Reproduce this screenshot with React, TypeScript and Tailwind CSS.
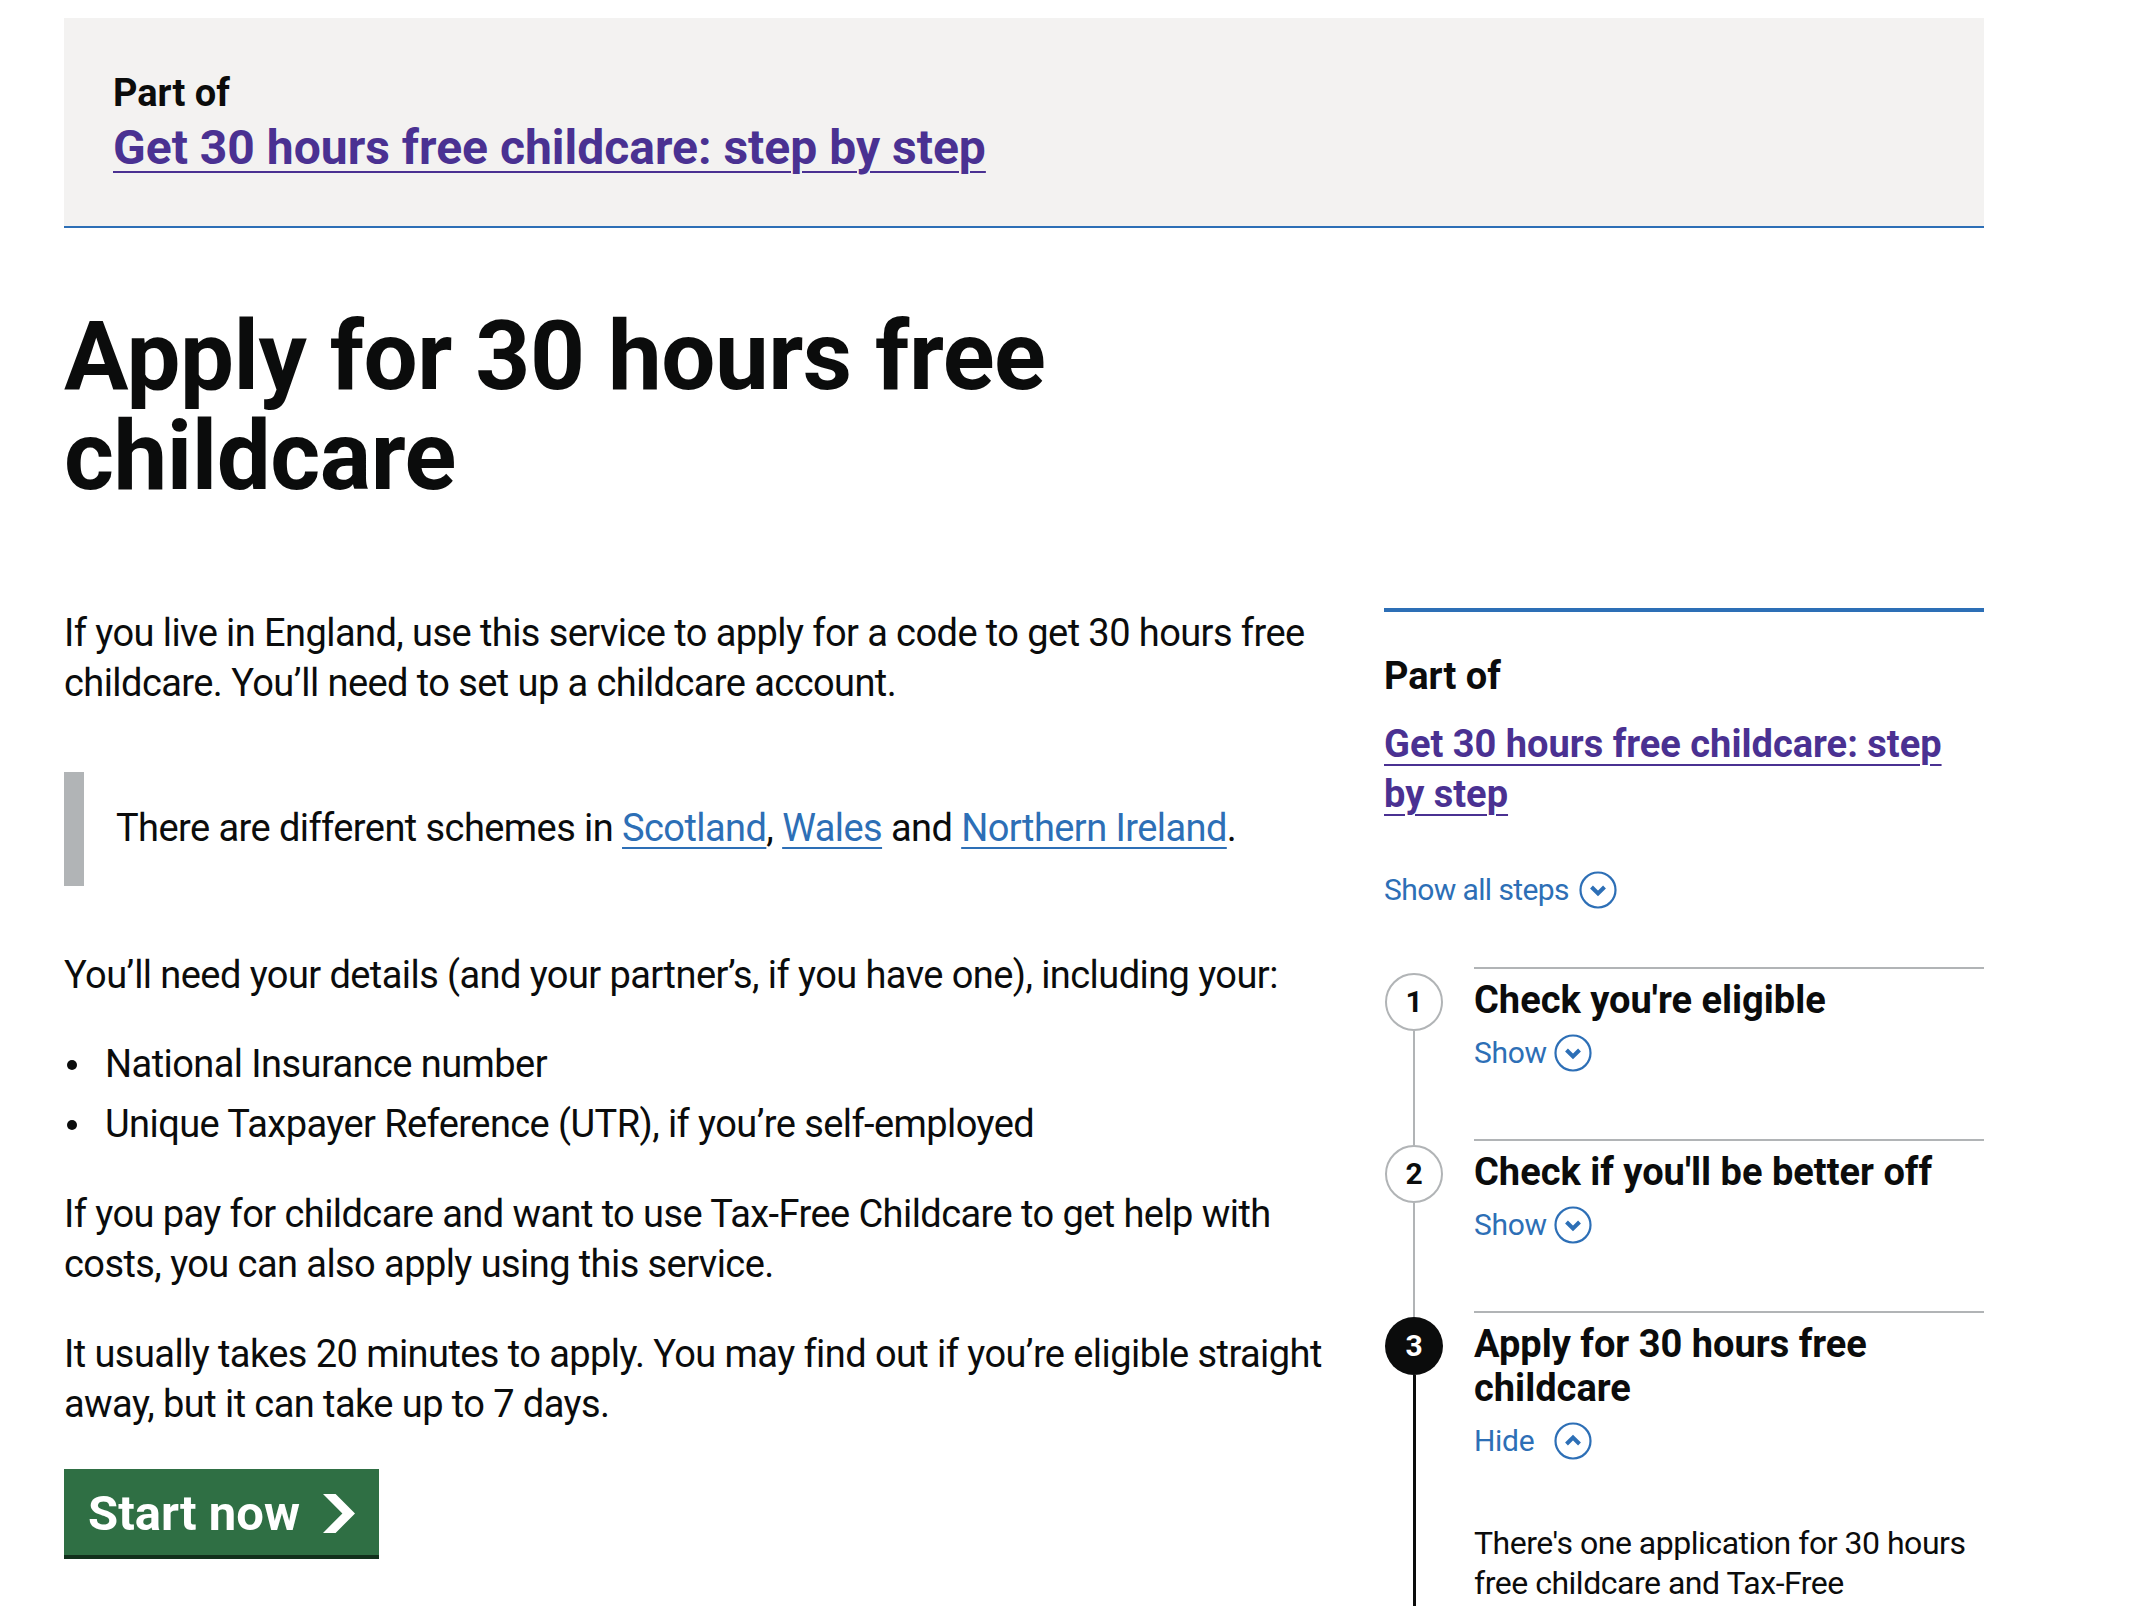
import React from 'react';

const BLUE = 'text-[#2d6fb6]';

const ChevronCircle: React.FC<{ up?: boolean }> = ({ up }) => (
  <svg width="38" height="38" viewBox="0 0 38 38" className="shrink-0" aria-hidden="true">
    <circle cx="19" cy="19" r="17.5" fill="none" stroke="#2d6fb6" strokeWidth="2.2" />
    <polyline
      points={up ? '12.5,22 19,15.5 25.5,22' : '12.5,16 19,22.5 25.5,16'}
      fill="none"
      stroke="#2d6fb6"
      strokeWidth="4"
      strokeLinejoin="miter"
    />
  </svg>
);

const StartArrow = () => (
  <svg width="32" height="39" viewBox="0 0 33 40" aria-hidden="true" className="shrink-0">
    <path fill="#ffffff" d="M0 0h13l20 20-20 20H0l20-20z" />
  </svg>
);

interface Step {
  n: number;
  title: string;
  open?: boolean;
}

const steps: Step[] = [
  { n: 1, title: "Check you're eligible" },
  { n: 2, title: "Check if you'll be better off" },
  { n: 3, title: 'Apply for 30 hours free childcare', open: true },
];

const StepItem: React.FC<{ step: Step; first: boolean }> = ({ step, first }) => {
  const active = !!step.open;
  return (
    <li className="flex">
      <div className="w-[60px] shrink-0 flex flex-col items-center">
        <div className={`h-[6px] w-[2px] ${first ? 'bg-transparent' : 'bg-[#b1b4b6]'}`} />
        <div
          className={`w-[58px] h-[58px] rounded-full flex items-center justify-center text-[30px] font-bold leading-none ${
            active ? 'bg-[#0b0c0c] text-white' : 'bg-white border-2 border-[#b1b4b6] text-[#0b0c0c]'
          }`}
        >
          {step.n}
        </div>
        <div className={`flex-1 ${active ? 'w-[3px] bg-[#0b0c0c]' : 'w-[2px] bg-[#b1b4b6]'}`} />
      </div>
      <div className="ml-[30px] flex-1 border-t-2 border-[#b1b4b6] pt-[9px]">
        <h3 className="text-[38px] leading-[44px] font-bold text-[#0b0c0c]">{step.title}</h3>
        <div className={`mt-[11px] h-[40px] flex items-center ${BLUE}`}>
          <span className="w-[80px] text-[30px] leading-[40px] tracking-[-0.01em]">{step.open ? 'Hide' : 'Show'}</span>
          <ChevronCircle up={step.open} />
        </div>
        {step.open ? (
          <div className="pt-[62px] pb-[40px]">
            <p className="text-[32px] leading-[40px] tracking-[-0.015em] text-[#0b0c0c]">
              There's one application for 30 hours free childcare and Tax-Free Childcare.
            </p>
          </div>
        ) : (
          <div className="h-[66px]" />
        )}
      </div>
    </li>
  );
};

export default function App() {
  return (
    <div className="min-h-screen bg-white font-[Roboto,sans-serif] text-[#0b0c0c]">
      <div className="w-[1920px] ml-[64px] pt-[18px]">
        {/* Breadcrumb: part of step by step */}
        <div className="bg-[#f3f2f1] border-b-2 border-[#2d6fb6] pl-[49px] pt-[50px] pb-[48px]">
          <p className="text-[38px] leading-[50px] font-bold">Part of</p>
          <a
            href="#"
            className="block w-fit text-[48px] leading-[60px] font-bold text-[#4a3192] underline decoration-2 underline-offset-[7px]"
          >
            Get 30 hours free childcare: step by step
          </a>
        </div>

        <h1 className="mt-[78px] w-[1280px] text-[96px] leading-[100px] font-bold tracking-[-0.005em]">
          Apply for 30 hours free childcare
        </h1>

        <div className="mt-[102px] flex justify-between">
          {/* Main content */}
          <div className="w-[1280px] text-[38px] leading-[50px] tracking-[-0.015em]">
            <p>If you live in England, use this service to apply for a code to get 30 hours free childcare. You’ll need to set up a childcare account.</p>

            <div className="mt-[64px] border-l-[20px] border-[#b1b4b6] pl-[32px] pt-[31px] pb-[33px]">
              <p>
                There are different schemes in{' '}
                <a href="#" className={`${BLUE} underline decoration-2 underline-offset-[6px]`}>Scotland</a>,{' '}
                <a href="#" className={`${BLUE} underline decoration-2 underline-offset-[6px]`}>Wales</a> and{' '}
                <a href="#" className={`${BLUE} underline decoration-2 underline-offset-[6px]`}>Northern Ireland</a>.
              </p>
            </div>

            <p className="mt-[64px]">You’ll need your details (and your partner’s, if you have one), including your:</p>

            <ul className="mt-[39px] flex flex-col gap-[10px]">
              {['National Insurance number', 'Unique Taxpayer Reference (UTR), if you’re self-employed'].map((item) => (
                <li key={item} className="flex">
                  <span className="w-[41px] shrink-0">
                    <span className="block mt-[21px] ml-[3px] w-[10px] h-[10px] rounded-full bg-[#0b0c0c]" />
                  </span>
                  <span>{item}</span>
                </li>
              ))}
            </ul>

            <p className="mt-[40px]">If you pay for childcare and want to use Tax-Free Childcare to get help with costs, you can also apply using this service.</p>

            <p className="mt-[40px]">It usually takes 20 minutes to apply. You may find out if you’re eligible straight away, but it can take up to 7 days.</p>

            <a
              href="#"
              className="mt-[40px] mb-[80px] flex items-start w-fit h-[86px] pl-[24px] pr-[24px] bg-[#2f6f44] text-white shadow-[0_4px_0_#12301c] tracking-normal"
            >
              <span className="mt-[21px] text-[49px] leading-[48px] font-bold">Start now</span>
              <span className="ml-[23px] mt-[25px]">
                <StartArrow />
              </span>
            </a>
          </div>

          {/* Step by step sidebar */}
          <aside className="w-[600px] border-t-4 border-[#2d6fb6] pt-[39px]">
            <h2 className="text-[38px] leading-[50px] font-bold">Part of</h2>
            <a
              href="#"
              className="mt-[18px] block text-[38px] leading-[50px] font-bold text-[#4a3192] underline decoration-2 underline-offset-[7px]"
            >
              Get 30 hours free childcare: step by step
            </a>

            <div className={`mt-[51px] h-[40px] flex items-center ${BLUE}`}>
              <span className="text-[30px] leading-[40px] tracking-[-0.02em]">Show all steps</span>
              <span className="ml-[10px]">
                <ChevronCircle />
              </span>
            </div>

            <ol className="mt-[57px]">
              {steps.map((s, i) => (
                <StepItem key={s.n} step={s} first={i === 0} />
              ))}
            </ol>
          </aside>
        </div>
      </div>
    </div>
  );
}
